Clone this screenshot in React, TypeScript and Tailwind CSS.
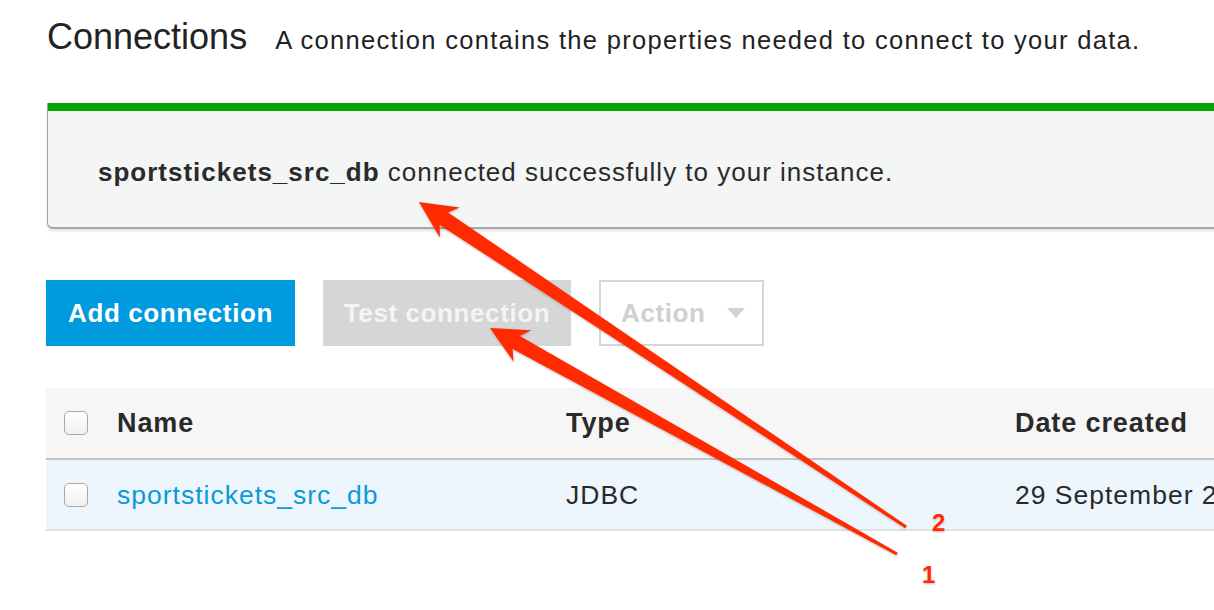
import React from "react";

const font = { fontFamily: '"Liberation Sans", Arial, Helvetica, sans-serif' };

type Pt = [number, number];

// tapered annotation arrow: tip, tail, head length / half width, shaft widths
function arrowPoints(tip: Pt, tail: Pt, headLen = 37, headHalf = 18, wHead = 15, wTail = 3) {
  const dx = tail[0] - tip[0];
  const dy = tail[1] - tip[1];
  const len = Math.hypot(dx, dy);
  const ux = dx / len;
  const uy = dy / len;
  const nx = -uy;
  const ny = ux;
  const base: Pt = [tip[0] + ux * headLen, tip[1] + uy * headLen];
  const neck: Pt = [tip[0] + ux * (headLen - 7), tip[1] + uy * (headLen - 7)];
  const p = (c: Pt, s: number): string => `${c[0] + nx * s},${c[1] + ny * s}`;
  return [
    `${tip[0]},${tip[1]}`,
    p(base, headHalf),
    p(neck, wHead / 2),
    p(tail, wTail / 2),
    p(tail, -wTail / 2),
    p(neck, -wHead / 2),
    p(base, -headHalf),
  ].join(" ");
}

function Checkbox() {
  return (
    <span className="block w-[24px] h-[24px] rounded-[5px] border border-[#a9a9a9] bg-gradient-to-b from-white to-[#f1f1f1]" />
  );
}

export default function App() {
  return (
    <div className="relative w-[1214px] h-[610px] overflow-hidden bg-white text-[#222]" style={font}>
      <div className="pl-[47px] pt-[15px]">
        <div className="flex items-baseline gap-[28px]">
          <h1 className="text-[36px] leading-[44px] text-[#222]">Connections</h1>
          <p className="text-[25.5px] tracking-[1.3px] text-[#222] whitespace-nowrap">
            A connection contains the properties needed to connect to your data.
          </p>
        </div>

        <div className="mt-[44px] w-[1240px] border-l border-[#a4a7aa] border-b-2 border-b-[#a4a7aa] rounded-bl-[6px] bg-[#f4f5f5] shadow-[0_2px_3px_rgba(0,0,0,0.12)]">
          <div className="h-[8px] bg-[#00a605]" />
          <div className="h-[116px] flex items-center pl-[50px] pt-[6px] text-[26px] tracking-[1px] text-[#2a2a2a]">
            <span>
              <b>sportstickets_src_db</b> connected successfully to your instance.
            </span>
          </div>
        </div>
      </div>

      <div className="flex gap-[28px] pl-[46px] mt-[51px]">
        <button className="h-[66px] w-[249px] bg-[#009ade] text-white text-[26px] tracking-[0.6px] font-bold">
          Add connection
        </button>
        <button className="h-[66px] w-[248px] bg-[#d5d6d6] text-[#f4f4f4] text-[26px] tracking-[0.6px] font-bold">
          Test connection
        </button>
        <button className="h-[66px] w-[165px] border-2 border-[#d6d6d6] text-[#d0d0d0] text-[26px] tracking-[0.6px] font-bold flex items-center pl-[20px] gap-[22px]">
          Action
          <svg width="18" height="10" viewBox="0 0 18 10">
            <polygon points="0,0 18,0 9,10" fill="#d3d3d3" />
          </svg>
        </button>
      </div>

      <div className="ml-[46px] mt-[42px] w-[1240px]">
        <div className="grid grid-cols-[71px_449px_449px_1fr] items-center h-[72px] bg-[#f6f6f6] border-b-2 border-[#c3c3c3] text-[27px] tracking-[0.9px] font-bold text-[#2a2a2a]">
          <div className="pl-[18px]">
            <Checkbox />
          </div>
          <div>Name</div>
          <div>Type</div>
          <div>Date created</div>
        </div>
        <div className="grid grid-cols-[71px_449px_449px_1fr] items-center h-[71px] bg-[#edf6fd] border-b-2 border-[#dfe1e2] text-[26.5px] tracking-[1px] text-[#2a2a2a]">
          <div className="pl-[18px]">
            <Checkbox />
          </div>
          <div className="text-[#0a9ad8] pt-[2px]">sportstickets_src_db</div>
          <div className="pt-[2px]">JDBC</div>
          <div className="whitespace-nowrap pt-[2px]">29 September 2019</div>
        </div>
      </div>

      <svg className="absolute inset-0 pointer-events-none" width="1214" height="610">
        <defs>
          <filter id="sh" x="-10%" y="-10%" width="120%" height="120%">
            <feDropShadow dx="0" dy="1" stdDeviation="1" floodColor="#000" floodOpacity="0.25" />
          </filter>
        </defs>
        <polygon points={arrowPoints([419, 202], [906, 527])} fill="#ff2a00" filter="url(#sh)" />
        <polygon points={arrowPoints([490, 328], [897, 554])} fill="#ff2a00" filter="url(#sh)" />
      </svg>
      <span
        className="absolute left-[932px] top-[505px] text-[24px] font-bold text-[#ff2a00]"
        style={{ textShadow: "0 0 2px #fff, 0 1px 2px rgba(0,0,0,0.35)" }}
      >
        2
      </span>
      <span
        className="absolute left-[922px] top-[557px] text-[24px] font-bold text-[#ff2a00]"
        style={{ textShadow: "0 0 2px #fff, 0 1px 2px rgba(0,0,0,0.35)" }}
      >
        1
      </span>
    </div>
  );
}
